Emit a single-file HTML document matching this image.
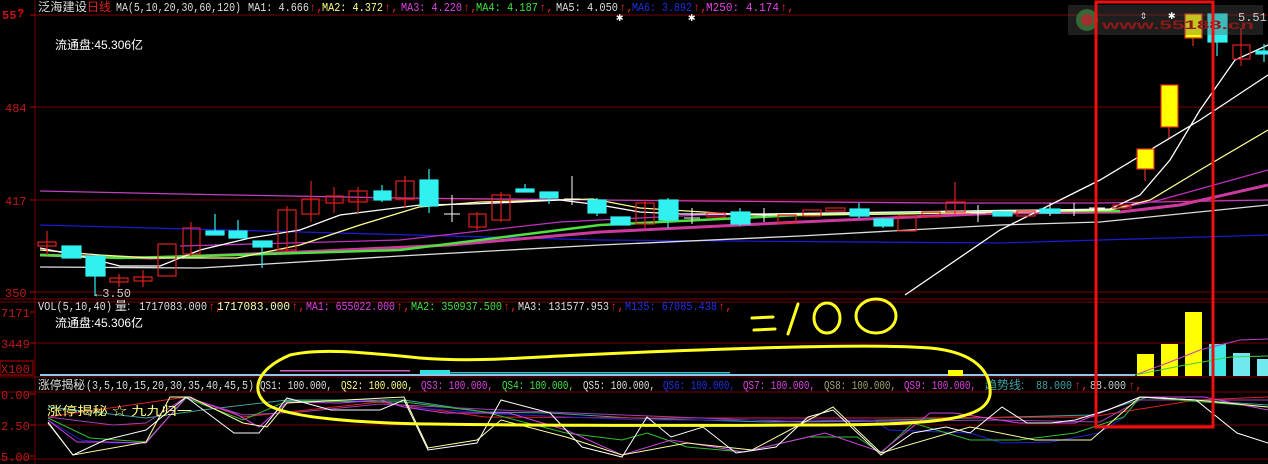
<!DOCTYPE html>
<html><head><meta charset="utf-8"><style>
html,body{margin:0;padding:0;background:#000;width:1268px;height:464px;overflow:hidden}
svg{display:block}
text{font-family:"Liberation Mono","Noto Sans CJK SC",monospace;font-size:12px}
.c{font-family:"Liberation Sans","Noto Sans CJK SC",sans-serif}
</style></head><body>
<svg width="1268" height="464" viewBox="0 0 1268 464" xmlns="http://www.w3.org/2000/svg">
<rect width="1268" height="464" fill="#000"/>
<g stroke="#7a0000" stroke-width="1" fill="none">
<line x1="35" y1="15" x2="1268" y2="15"/>
<line x1="35" y1="107" x2="1268" y2="107"/>
<line x1="35" y1="200" x2="1268" y2="200"/>
<line x1="35" y1="292" x2="1268" y2="292"/>
<line x1="0" y1="299" x2="1268" y2="299"/>
<line x1="0" y1="302" x2="1268" y2="302"/>
<line x1="35" y1="343" x2="1268" y2="343"/>
<line x1="0" y1="377" x2="1268" y2="377"/>
<line x1="0" y1="392" x2="1268" y2="392"/>
<line x1="35" y1="425" x2="1268" y2="425"/>
<line x1="0" y1="459" x2="1268" y2="459"/>
<line x1="35" y1="0" x2="35" y2="464"/>
</g>
<g stroke="#b00" stroke-width="1">
<line x1="30" y1="15" x2="35" y2="15"/><line x1="30" y1="107" x2="35" y2="107"/><line x1="30" y1="200" x2="35" y2="200"/><line x1="30" y1="292" x2="35" y2="292"/>
<line x1="30" y1="312" x2="35" y2="312"/><line x1="30" y1="343" x2="35" y2="343"/><line x1="30" y1="394" x2="35" y2="394"/><line x1="30" y1="425" x2="35" y2="425"/><line x1="30" y1="456" x2="35" y2="456"/>
</g>
<g fill="#c01818" font-size="12">
<text x="2" y="19" font-weight="bold">55</text><text x="17" y="17" font-weight="bold" fill="#e00" font-size="15">?</text>
<text x="5" y="112">484</text><text x="5" y="205">417</text><text x="5" y="297">350</text>
<text x="1" y="317">7171</text><text x="1" y="348">3449</text>
<text x="1" y="399">0.00</text><text x="1" y="430">2.50</text><text x="1" y="461">5.00</text>
</g>
<rect x="0" y="361" width="33" height="14" fill="none" stroke="#b00"/>
<text x="1" y="373" fill="#c01818" font-size="12">X100</text>

<g fill="none" stroke-width="1.3">
<polyline stroke="#c040c0" points="40,191 180,194 400,198 700,201 940,203 1100,203 1268,200"/>
<polyline stroke="#1a1ad0" points="40,225 300,232 600,240 1000,243 1268,235"/>
<polyline stroke="#ddd" points="40,267 200,268 400,256 600,245 800,236 1000,225 1100,222 1268,205"/>
<polyline stroke="#c030c0" points="180,246 400,240 560,222 700,215 900,213 1110,210 1160,200 1268,170"/>
<polyline stroke="#cc3aa0" stroke-width="3" points="40,255 150,258 300,252 450,245 600,232 800,222 1000,213 1120,212 1180,205 1268,185"/>
<polyline stroke="#50e040" stroke-width="2.5" points="40,255 120,258 200,256 400,250 600,225 800,215 1000,211 1120,211"/>
<polyline stroke="#ffff90" points="40,250 100,255 150,258 237,258 300,245 360,225 419,207 480,202 593,199 640,208 750,215 900,214 1110,210 1150,200 1200,170 1268,130"/>
<polyline stroke="#fff" points="40,248 80,256 120,266 160,266 200,250 250,238 300,230 340,215 380,210 420,205 470,204 520,202 560,200 600,205 640,212 680,214 760,214 900,212 1110,209 1140,195 1170,160 1200,110 1235,60 1268,45"/>
<polyline stroke="#fff" points="905,295 1000,230 1100,180 1200,120 1268,75"/>
</g>

<g stroke-width="1.2">
<g stroke="#e02020" fill="none">
<line x1="47" y1="231" x2="47" y2="255"/><rect x="38" y="242" width="18" height="4"/>
<line x1="119" y1="274" x2="119" y2="287"/><rect x="110" y="278" width="18" height="4"/>
<line x1="143" y1="270" x2="143" y2="287"/><rect x="134" y="277" width="18" height="4"/>
<rect x="158" y="244" width="18" height="32"/>
<line x1="191" y1="222" x2="191" y2="256"/><rect x="183" y="228" width="17" height="26"/>
<line x1="287" y1="206" x2="287" y2="252"/><rect x="278" y="210" width="18" height="40"/>
<line x1="311" y1="181" x2="311" y2="222"/><rect x="302" y="199" width="17" height="15"/>
<line x1="334" y1="187" x2="334" y2="213"/><rect x="326" y="196" width="17" height="7"/>
<line x1="358" y1="187" x2="358" y2="213"/><rect x="349" y="191" width="18" height="11"/>
<line x1="405" y1="176" x2="405" y2="208"/><rect x="396" y="181" width="18" height="18"/>
<line x1="477" y1="212" x2="477" y2="230"/><rect x="469" y="214" width="17" height="13"/>
<line x1="501" y1="192" x2="501" y2="222"/><rect x="492" y="195" width="18" height="25"/>
<line x1="645" y1="200" x2="645" y2="228"/><rect x="636" y="203" width="18" height="21"/>
<rect x="707" y="213" width="18" height="4"/>
<rect x="778" y="215" width="18" height="8"/>
<rect x="803" y="210" width="18" height="6"/>
<rect x="826" y="208" width="19" height="3"/>
<rect x="898" y="216" width="18" height="15"/>
<rect x="922" y="212" width="18" height="5"/>
<line x1="955" y1="182" x2="955" y2="214"/><rect x="946" y="202" width="19" height="10"/>
<rect x="1017" y="211" width="18" height="5"/>
<rect x="1113" y="205" width="18" height="3"/>
<line x1="1241" y1="28" x2="1241" y2="66"/><rect x="1233" y="45" width="17" height="14"/>
</g>
<g stroke="#ffffff" stroke-width="1">
<line x1="452" y1="195" x2="452" y2="222"/><line x1="444" y1="214" x2="460" y2="214"/>
<line x1="572" y1="176" x2="572" y2="205"/><line x1="564" y1="199" x2="580" y2="199"/>
<line x1="692" y1="208" x2="692" y2="224"/><line x1="684" y1="218" x2="700" y2="218"/>
<line x1="764" y1="208" x2="764" y2="222"/><line x1="756" y1="215" x2="772" y2="215"/>
<line x1="978" y1="205" x2="978" y2="222"/><line x1="970" y1="213" x2="986" y2="213"/>
<line x1="1050" y1="203" x2="1050" y2="216"/><line x1="1042" y1="210" x2="1058" y2="210"/>
<line x1="1074" y1="203" x2="1074" y2="216"/><line x1="1066" y1="210" x2="1082" y2="210"/>
<line x1="1097" y1="201" x2="1097" y2="216"/><line x1="1089" y1="208" x2="1105" y2="208"/>
</g>
<g fill="#30f0f0" stroke="#30f0f0">
<rect x="62" y="246" width="19" height="12"/>
<line x1="95" y1="256" x2="95" y2="296"/><rect x="86" y="256" width="19" height="20"/>
<line x1="215" y1="214" x2="215" y2="235"/><rect x="206" y="231" width="18" height="4"/>
<line x1="238" y1="220" x2="238" y2="238"/><rect x="229" y="231" width="18" height="7"/>
<line x1="262" y1="241" x2="262" y2="268"/><rect x="253" y="241" width="19" height="6"/>
<line x1="382" y1="185" x2="382" y2="202"/><rect x="374" y="191" width="17" height="9"/>
<line x1="429" y1="169" x2="429" y2="213"/><rect x="420" y="180" width="18" height="26"/>
<line x1="525" y1="184" x2="525" y2="192"/><rect x="516" y="189" width="18" height="3"/>
<line x1="549" y1="192" x2="549" y2="204"/><rect x="540" y="192" width="18" height="6"/>
<line x1="597" y1="198" x2="597" y2="216"/><rect x="588" y="200" width="18" height="13"/>
<rect x="611" y="217" width="19" height="8"/>
<line x1="668" y1="198" x2="668" y2="228"/><rect x="659" y="200" width="19" height="20"/>
<line x1="740" y1="208" x2="740" y2="226"/><rect x="731" y="212" width="19" height="12"/>
<line x1="859" y1="203" x2="859" y2="218"/><rect x="850" y="209" width="19" height="7"/>
<line x1="883" y1="218" x2="883" y2="228"/><rect x="874" y="219" width="19" height="7"/>
<rect x="993" y="212" width="19" height="4"/>
<rect x="1040" y="209" width="20" height="4"/>
<line x1="1217" y1="14" x2="1217" y2="56"/><rect x="1208" y="14" width="19" height="28"/>
<rect x="1256" y="51" width="12" height="3"/><line x1="1264" y1="44" x2="1264" y2="62"/>
</g>
<g fill="#ffff00" stroke="#e03020">
<line x1="1145" y1="169" x2="1145" y2="181"/><rect x="1137" y="149" width="17" height="20"/>
<line x1="1169" y1="127" x2="1169" y2="138"/><rect x="1161" y="85" width="17" height="42"/>
<line x1="1193" y1="38" x2="1193" y2="46"/><rect x="1185" y="14" width="17" height="24"/>
</g>
</g>

<rect x="1068" y="5" width="195" height="30" fill="#555" opacity="0.35"/>
<circle cx="1087" cy="20" r="11" fill="#3a7a3a" opacity="0.8"/><circle cx="1087" cy="20" r="6" fill="#a03030"/>
<text x="1102" y="29" fill="#901818" font-size="22" font-weight="bold" class="c" textLength="152" lengthAdjust="spacingAndGlyphs">www.55188.cn</text>
<text x="1238" y="21" fill="#ccc" font-size="10">5.51</text>

<g>
<rect x="40" y="374" width="1095" height="2" fill="#8cc8f0"/>
<rect x="280" y="370" width="130" height="1.5" fill="#d060c0"/>
<rect x="420" y="370" width="30" height="4" fill="#30e0e0"/>
<rect x="450" y="372" width="280" height="1.5" fill="#30c0c0"/>
<rect x="948" y="370" width="15" height="6" fill="#ffff00"/>
<rect x="1137" y="354" width="17" height="22" fill="#ffff00"/>
<rect x="1161" y="344" width="17" height="32" fill="#ffff00"/>
<rect x="1185" y="312" width="17" height="64" fill="#ffff00"/>
<rect x="1209" y="344" width="17" height="32" fill="#40e8e8"/>
<rect x="1233" y="353" width="17" height="23" fill="#70e8f0"/>
<rect x="1257" y="359" width="11" height="17" fill="#70e8f0"/>
<polyline fill="none" stroke="#c040c0" points="1135,375 1170,362 1200,350 1240,340 1268,339"/>
<polyline fill="none" stroke="#40d040" points="1135,375 1180,366 1230,357 1268,356"/>
</g>

<g fill="none" stroke-width="1">
<polyline stroke="#40a0a0" points="48,407 146,418 202,410 287,400 404,400 485,412 550,413 631,418 768,422 889,420 1091,415 1148,397 1268,405"/>
<polyline stroke="#e02020" points="48,417 186,397 243,417 380,402 485,417 647,418 889,418 1091,417 1196,400 1268,397"/>
<polyline stroke="#a040b0" points="48,417 113,425 146,423 186,397 243,415 300,412 380,404 500,410 650,416 800,422 1000,420 1100,422 1140,400 1268,400"/>
<polyline stroke="#2020d0" points="48,420 81,440 113,443 146,443 186,397 234,413 259,427 287,402 380,400 404,407 500,414 640,420 873,420 889,430 970,433 1002,443 1051,442 1099,433 1124,417 1140,397"/>
<polyline stroke="#30c030" points="48,418 90,438 146,442 186,398 243,420 287,401 404,402 485,412 566,433 622,440 647,433 687,447 744,452 808,437 857,437 881,453 913,423 970,440 1019,440 1075,433 1124,417 1140,397 1268,407"/>
<polyline stroke="#d040e0" points="48,420 77,442 105,442 146,443 186,397 234,413 259,427 287,402 340,403 380,400 404,407 445,413 509,413 566,430 622,455 671,440 744,452 825,433 881,452 930,413 954,413 1019,423 1075,423 1140,397 1204,397 1268,410"/>
<polyline stroke="#ffffa0" points="48,423 73,455 146,442 170,397 190,397 243,423 267,427 287,403 404,397 428,448 477,440 501,420 566,437 622,455 687,443 752,450 833,407 881,453 970,427 1035,440 1091,440 1140,397 1196,400 1268,407"/>
<polyline stroke="#ffffff" points="48,422 73,455 105,440 146,430 186,397 234,433 259,433 287,398 331,410 380,410 404,400 428,450 477,443 501,400 550,413 582,447 622,457 647,417 671,437 703,427 736,453 776,447 808,417 833,410 881,455 913,433 946,427 970,433 1002,407 1027,423 1051,423 1075,420 1108,410 1140,397 1196,400 1237,433 1268,443"/>
</g>

<g font-size="12">
<text x="38" y="11" fill="#ddd" class="c" font-size="12" textLength="49" lengthAdjust="spacingAndGlyphs">泛海建设</text><text x="87" y="11" fill="#e02020" class="c" font-size="12">日线</text>
<text x="116" y="11" fill="#ddd" textLength="125" lengthAdjust="spacingAndGlyphs">MA(5,10,20,30,60,120)</text>
<text x="248" y="11" fill="#ddd" textLength="61" lengthAdjust="spacingAndGlyphs">MA1: 4.666</text><text x="309" y="11" fill="#e02020">↑,</text>
<text x="322" y="11" fill="#ffff80" textLength="61" lengthAdjust="spacingAndGlyphs">MA2: 4.372</text><text x="384" y="11" fill="#e02020">↑,</text>
<text x="401" y="11" fill="#e040e0" textLength="61" lengthAdjust="spacingAndGlyphs">MA3: 4.220</text><text x="463" y="11" fill="#e02020">↑,</text>
<text x="476" y="11" fill="#40e040" textLength="62" lengthAdjust="spacingAndGlyphs">MA4: 4.187</text><text x="539" y="11" fill="#e02020">↑,</text>
<text x="556" y="11" fill="#ddd" textLength="62" lengthAdjust="spacingAndGlyphs">MA5: 4.050</text><text x="619" y="11" fill="#e02020">↑,</text>
<text x="632" y="11" fill="#2030e0" textLength="60" lengthAdjust="spacingAndGlyphs">MA6: 3.892</text><text x="693" y="11" fill="#e02020">↑,</text>
<text x="706" y="11" fill="#e040e0" textLength="73" lengthAdjust="spacingAndGlyphs">M250: 4.174</text><text x="780" y="11" fill="#e02020">↑,</text>
<text x="616" y="21" fill="#fff" font-size="11">✱</text><text x="688" y="21" fill="#fff" font-size="11">✱</text>
<text x="1168" y="19" fill="#fff" font-size="11">✱</text><text x="1140" y="19" fill="#ddd" font-size="11">⇕</text>
</g>
<text x="55" y="49" fill="#fff" class="c" font-size="12">流通盘:45.306亿</text>
<text x="95" y="297" fill="#ccc" font-size="10">←3.50</text>

<g font-size="12">
<text x="38" y="310" fill="#ddd" textLength="74" lengthAdjust="spacingAndGlyphs">VOL(5,10,40)</text>
<text x="115" y="310" fill="#ddd" class="c" font-size="12">量:</text>
<text x="139" y="310" fill="#ddd" textLength="68" lengthAdjust="spacingAndGlyphs">1717083.000</text><text x="208" y="310" fill="#e02020">↑,</text>
<text x="217" y="310" fill="#ffffb0" textLength="73" lengthAdjust="spacingAndGlyphs">1717083.000</text><text x="291" y="310" fill="#e02020">↑,</text>
<text x="306" y="310" fill="#e040e0" textLength="89" lengthAdjust="spacingAndGlyphs">MA1: 655022.000</text><text x="396" y="310" fill="#e02020">↑,</text>
<text x="411" y="310" fill="#40e040" textLength="91" lengthAdjust="spacingAndGlyphs">MA2: 350937.500</text><text x="503" y="310" fill="#e02020">↑,</text>
<text x="518" y="310" fill="#ddd" textLength="91" lengthAdjust="spacingAndGlyphs">MA3: 131577.953</text><text x="610" y="310" fill="#e02020">↑,</text>
<text x="625" y="310" fill="#2030e0" textLength="92" lengthAdjust="spacingAndGlyphs">M135: 67085.438</text><text x="718" y="310" fill="#e02020">↑,</text>
</g>
<text x="55" y="327" fill="#fff" class="c" font-size="12">流通盘:45.306亿</text>

<g font-size="11">
<text x="38" y="389" fill="#ddd" class="c" font-size="12" textLength="47" lengthAdjust="spacingAndGlyphs">涨停揭秘</text>
<text x="86" y="389" fill="#ddd" textLength="168" lengthAdjust="spacingAndGlyphs">(3,5,10,15,20,30,35,40,45,5)</text>
<text x="260" y="389" fill="#ddd" textLength="72" lengthAdjust="spacingAndGlyphs">QS1: 100.000,</text>
<text x="341" y="389" fill="#ffff80" textLength="72" lengthAdjust="spacingAndGlyphs">QS2: 100.000,</text>
<text x="421" y="389" fill="#e040e0" textLength="72" lengthAdjust="spacingAndGlyphs">QS3: 100.000,</text>
<text x="502" y="389" fill="#40e040" textLength="72" lengthAdjust="spacingAndGlyphs">QS4: 100.000,</text>
<text x="583" y="389" fill="#ddd" textLength="72" lengthAdjust="spacingAndGlyphs">QS5: 100.000,</text>
<text x="663" y="389" fill="#2030e0" textLength="72" lengthAdjust="spacingAndGlyphs">QS6: 100.000,</text>
<text x="743" y="389" fill="#e040e0" textLength="72" lengthAdjust="spacingAndGlyphs">QS7: 100.000,</text>
<text x="824" y="389" fill="#a0a070" textLength="72" lengthAdjust="spacingAndGlyphs">QS8: 100.000,</text>
<text x="904" y="389" fill="#e040e0" textLength="72" lengthAdjust="spacingAndGlyphs">QS9: 100.000,</text>
<text x="985" y="389" fill="#40a0a0" class="c" font-size="12">趋势线:</text>
<text x="1036" y="389" fill="#40a0a0" textLength="36" lengthAdjust="spacingAndGlyphs">88.000</text><text x="1074" y="389" fill="#e02020">↑,</text>
<text x="1090" y="389" fill="#ccc" textLength="36" lengthAdjust="spacingAndGlyphs">88.000</text><text x="1128" y="389" fill="#e02020">↑,</text>
</g>
<text x="47" y="415" fill="#ffff80" class="c" font-size="16" textLength="145" lengthAdjust="spacingAndGlyphs">涨停揭秘 ☆ 九九归一</text>

<g fill="none" stroke="#ffff20" stroke-width="3" stroke-linecap="round">
<path d="M290,355 C320,348 360,352 420,358 C470,362 520,358 560,356 C600,354 640,352 700,350 C780,347 880,344 930,348 C975,352 992,372 990,395 C985,420 940,425 800,425 C650,426 500,425 430,424 C360,423 290,418 268,405 C250,392 255,370 290,355 Z"/>
<path d="M752,318 L773,317 M754,330 L775,329"/>
<path d="M798,304 L788,334"/>
<ellipse cx="827" cy="318" rx="13" ry="15"/>
<ellipse cx="876" cy="316" rx="20" ry="17"/>
</g>

<rect x="1096" y="2" width="117" height="425" fill="none" stroke="#ee1010" stroke-width="3"/>
</svg>
</body></html>
